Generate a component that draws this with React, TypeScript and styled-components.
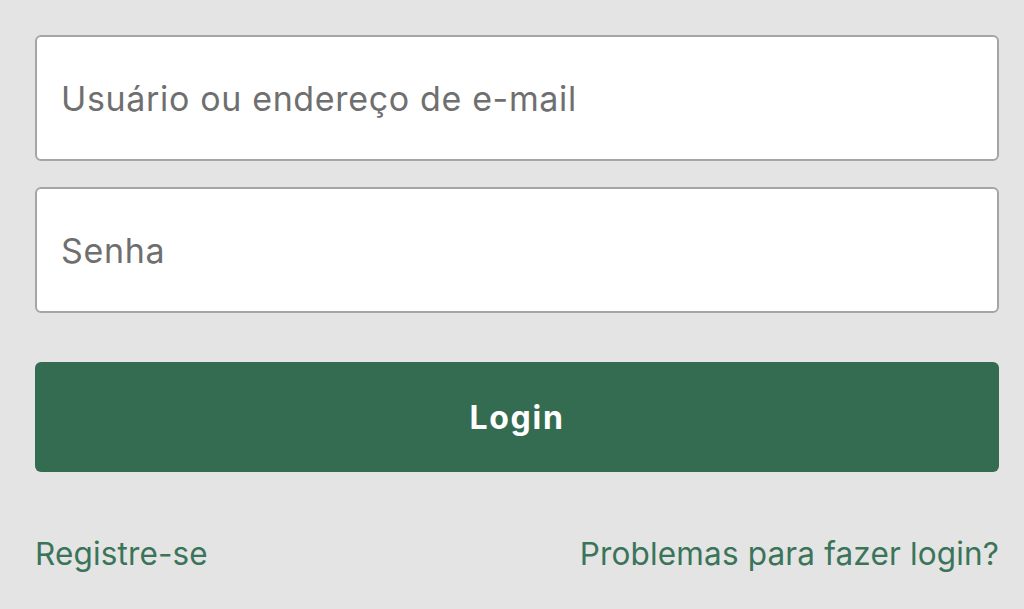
import React from 'react';
import styled, { createGlobalStyle } from 'styled-components';

const palette = {
  bg: '#e4e4e4',
  field: '#ffffff',
  border: '#a5a5a5',
  placeholder: '#6f6f6f',
  green: '#346c52',
  link: '#3a7459',
};

const GlobalStyle = createGlobalStyle`
  html, body {
    margin: 0;
    padding: 0;
    background: ${palette.bg};
    font-family: Inter, "Noto Sans", "Liberation Sans", sans-serif;
  }
`;

const Page = styled.div`
  width: 1024px;
  height: 609px;
  box-sizing: border-box;
  padding: 35px 25px 0 35px;
  display: flex;
  flex-direction: column;
`;

const Form = styled.form`
  display: flex;
  flex-direction: column;
  gap: 26px;
`;

const Field = styled.input`
  box-sizing: border-box;
  height: 126px;
  width: 100%;
  margin: 0;
  padding: 0 24px;
  border: 2px solid ${palette.border};
  border-radius: 6px;
  background: ${palette.field};
  font-family: inherit;
  font-size: 34px;
  letter-spacing: 0.65px;
  color: #222;
  outline: none;

  &::placeholder {
    color: ${palette.placeholder};
    opacity: 1;
  }
`;

const LoginButton = styled.button`
  height: 110px;
  margin-top: 23px;
  border: none;
  border-radius: 6px;
  background: ${palette.green};
  color: #fff;
  font-family: inherit;
  font-size: 32px;
  font-weight: 700;
  letter-spacing: 1.7px;
  cursor: pointer;
`;

const Links = styled.div`
  display: flex;
  justify-content: space-between;
  align-items: center;
  margin-top: 62px;
`;

const TextLink = styled.a`
  color: ${palette.link};
  font-size: 31.5px;
  text-decoration: none;
  letter-spacing: 0.15px;
`;

export default function App() {
  return (
    <>
      <GlobalStyle />
      <Page>
        <Form onSubmit={(e) => e.preventDefault()}>
          <Field type="text" placeholder="Usuário ou endereço de e-mail" />
          <Field type="password" placeholder="Senha" />
          <LoginButton type="submit">Login</LoginButton>
        </Form>
        <Links>
          <TextLink href="#">Registre-se</TextLink>
          <TextLink href="#">Problemas para fazer login?</TextLink>
        </Links>
      </Page>
    </>
  );
}
